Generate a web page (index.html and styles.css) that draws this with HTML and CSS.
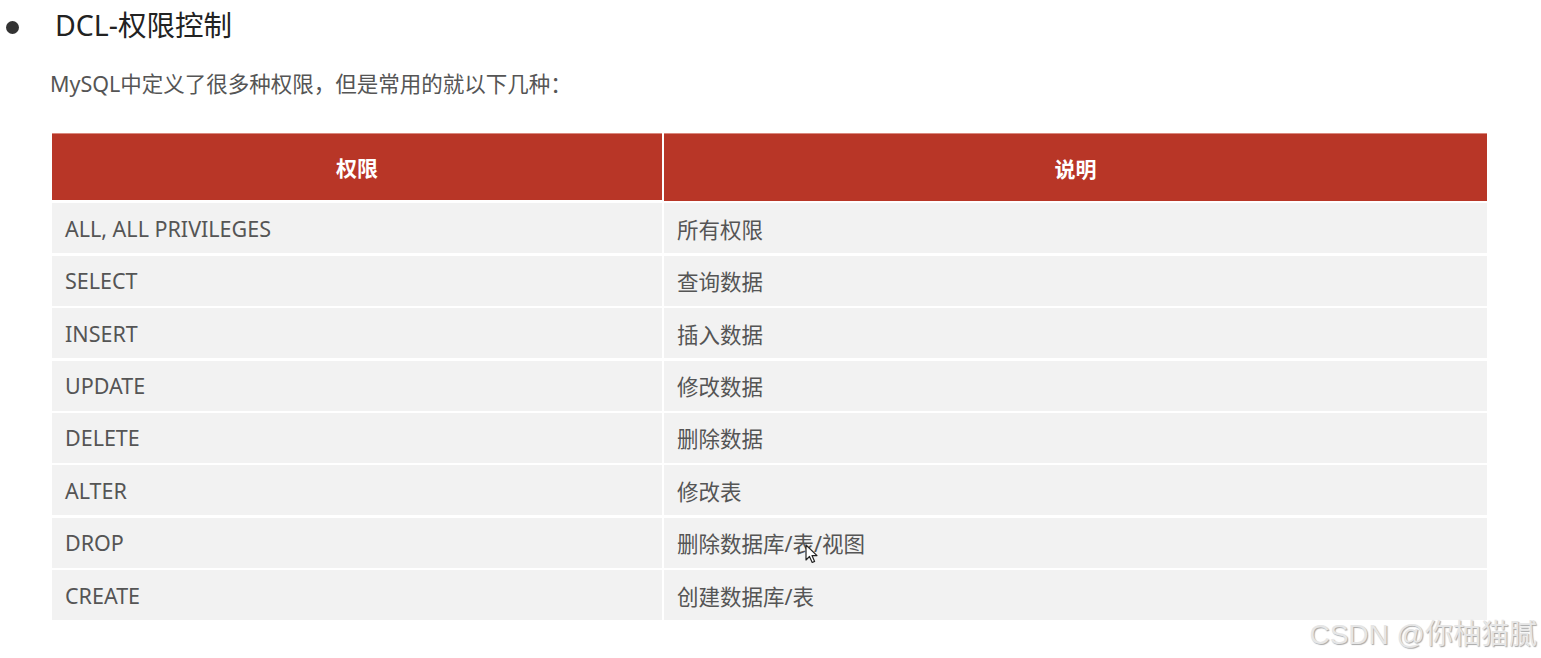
FILE: index.html
```html
<!DOCTYPE html>
<html lang="zh">
<head>
<meta charset="utf-8">
<title>DCL-权限控制</title>
<link rel="stylesheet" href="styles.css">
</head>
<body>
<div class="page">
  <h1 class="title"><span class="bullet"></span><span class="title-text">DCL-权限控制</span></h1>
  <p class="intro">MySQL中定义了很多种权限，但是常用的就以下几种：</p>
  <div class="table">
    <div class="th">权限</div><div class="th">说明</div>
    <div class="td">ALL, ALL PRIVILEGES</div><div class="td">所有权限</div>
    <div class="td">SELECT</div><div class="td">查询数据</div>
    <div class="td">INSERT</div><div class="td">插入数据</div>
    <div class="td">UPDATE</div><div class="td">修改数据</div>
    <div class="td">DELETE</div><div class="td">删除数据</div>
    <div class="td">ALTER</div><div class="td">修改表</div>
    <div class="td">DROP</div><div class="td cursor-cell">删除数据库/表/视图<svg class="cursor" width="14" height="20" viewBox="0 0 14 20"><path d="M1 1 L1 16 L4.5 12.5 L7.2 18.5 L9.6 17.4 L7 11.6 L12 11.6 Z" fill="#fff" stroke="#222" stroke-width="1.2" stroke-linejoin="round"/></svg></div>
    <div class="td">CREATE</div><div class="td">创建数据库/表</div>
  </div>
  <div class="watermark">CSDN @你柚猫腻</div>
</div>
</body>
</html>
```
FILE: styles.css
```css
html, body {
  margin: 0;
  padding: 0;
  background: #ffffff;
}
body {
  font-family: "Noto Sans", "Noto Sans CJK SC", sans-serif;
  color: #555555;
}
.page {
  position: relative;
  width: 1541px;
  height: 658px;
  overflow: hidden;
}
.title {
  display: flex;
  align-items: center;
  margin: 0;
  padding: 5px 0 0 6px;
  height: 40px;
  font-weight: normal;
  font-size: 28.5px;
  color: #222222;
}
.bullet {
  width: 13px;
  height: 13px;
  border-radius: 50%;
  background: #333333;
  margin-right: 36px;
  margin-top: 4px;
}
.title-text {
  line-height: 38px;
}
.intro {
  margin: 24px 0 0 50px;
  font-size: 21.5px;
  line-height: 30px;
  color: #555555;
}
.table {
  display: grid;
  grid-template-columns: 610px 823px;
  grid-template-rows: 68px repeat(8, 50px);
  column-gap: 2px;
  row-gap: 2.4px;
  margin: 34px 0 0 52px;
  width: 1435px;
}
.th {
  background: #b83627;
  color: #ffffff;
  font-weight: bold;
  font-size: 21px;
  display: flex;
  align-items: center;
  justify-content: center;
  border-top: 1px solid #d9887d;
}
.th:first-child {
  margin-bottom: 0.6px;
}
.td {
  background: #f2f2f2;
  display: flex;
  align-items: center;
  padding-left: 13px;
  font-size: 21.5px;
  color: #555555;
}
.cursor-cell {
  position: relative;
}
.cursor {
  position: absolute;
  left: 141px;
  top: 26px;
}
.watermark {
  position: absolute;
  right: 4px;
  top: 612px;
  font-size: 28px;
  color: #e6e6e6;
  text-shadow: 1px 1px 1px #a8a8a8;
  font-family: "Liberation Sans", "Noto Sans CJK SC", sans-serif;
}
```
